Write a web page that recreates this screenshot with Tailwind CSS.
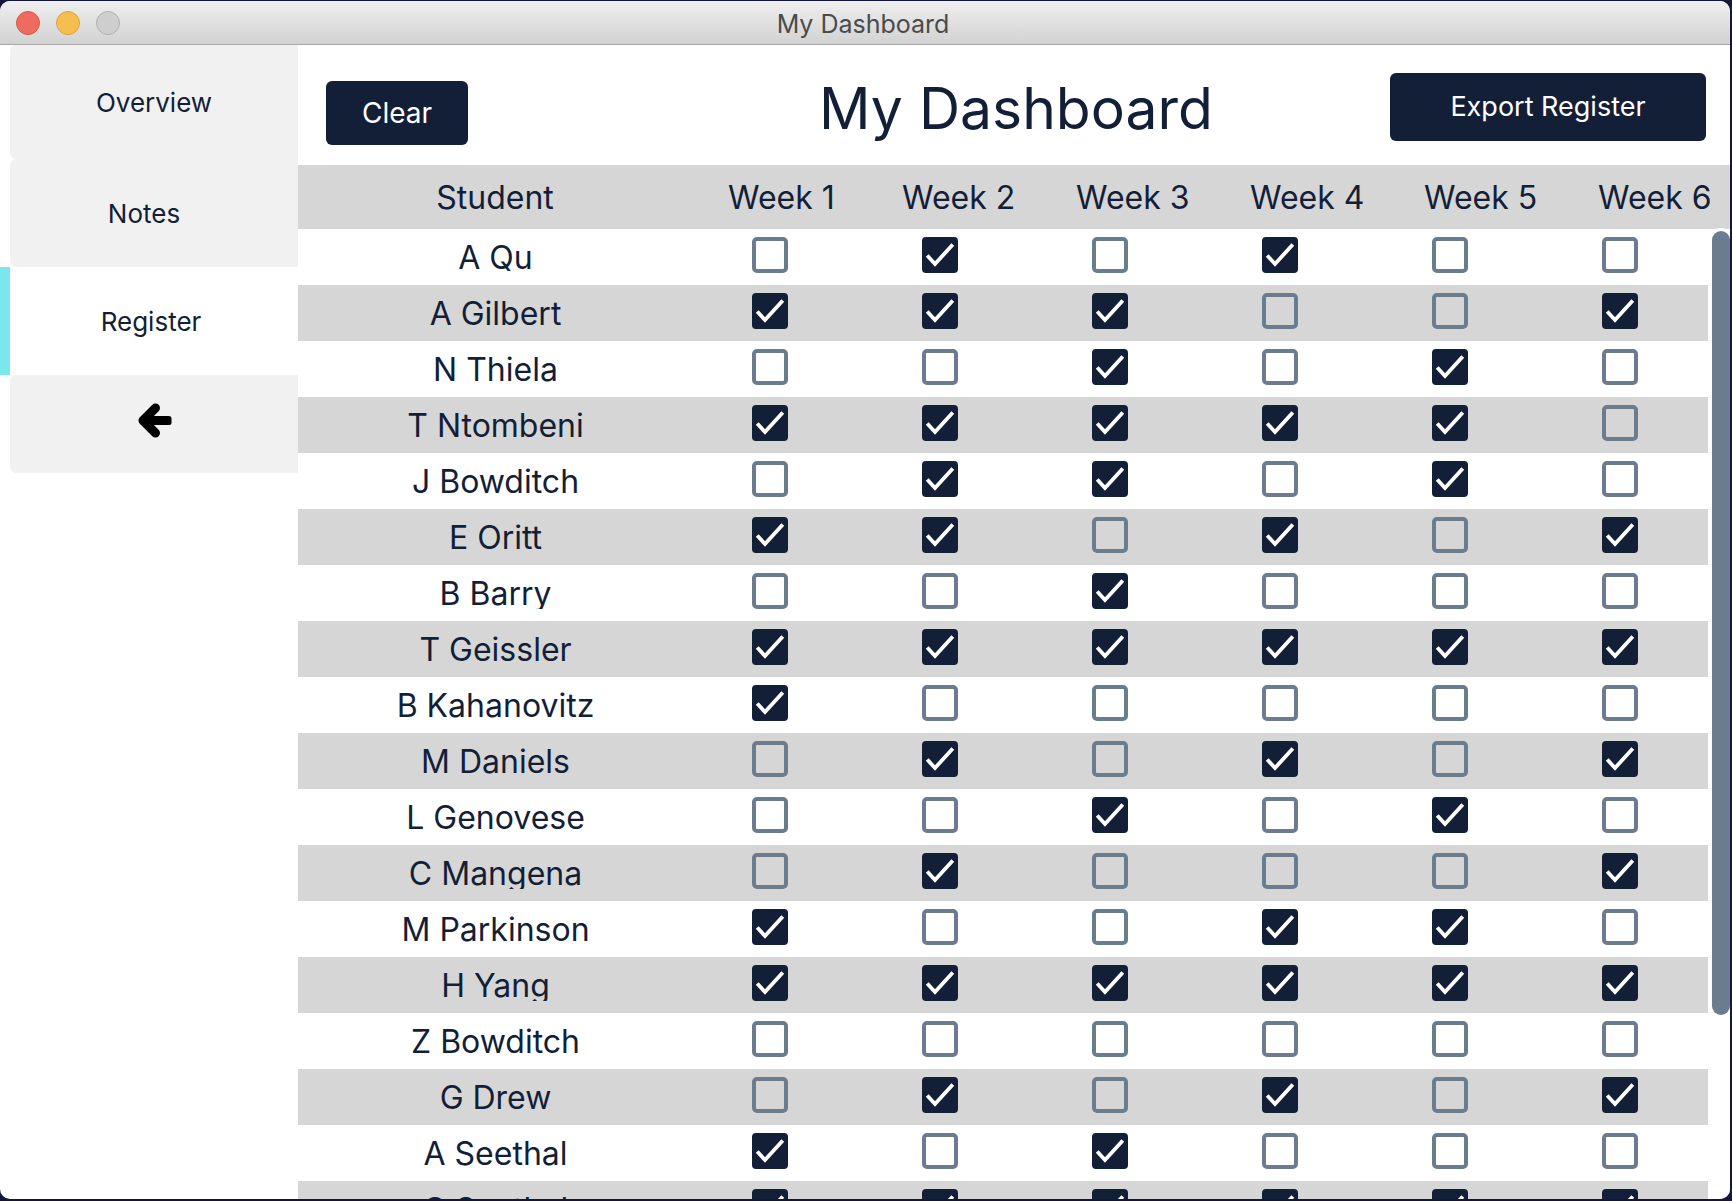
<!DOCTYPE html>
<html lang="en">
<head>
<meta charset="utf-8">
<title>My Dashboard</title>
<script src="https://cdn.jsdelivr.net/npm/@tailwindcss/browser@4"></script>
</head>
<body class="bg-[#14163a]">
<div class="flex h-screen flex-col overflow-hidden pt-px pr-0.5 pb-0.5 font-['Inter',sans-serif] text-[#131e37]">
  <div class="flex min-h-0 flex-1 flex-col overflow-hidden rounded-[10px] bg-white">
    <header class="relative flex h-11 shrink-0 items-center justify-center border-b border-[#a6a6a6] bg-linear-to-b from-[#efefef] to-[#d2d2d2]">
      <div class="absolute left-4 flex gap-4">
        <button aria-label="Close" class="size-6 rounded-full border border-[#d9564b] bg-[#ee6b60]"></button>
        <button aria-label="Minimize" class="size-6 rounded-full border border-[#dea23a] bg-[#f6be50]"></button>
        <button aria-label="Zoom" class="size-6 rounded-full border border-[#b0b0b0] bg-[#cecece]"></button>
      </div>
      <span class="pt-1 pr-1 text-[25px] text-[#4b4b4b]">My Dashboard</span>
    </header>
    <div class="flex min-h-0 flex-1">
      <nav class="flex w-[298px] shrink-0 flex-col text-[26px]">
        <a href="#overview" class="ml-2.5 flex h-[114px] items-center justify-center rounded-l-md bg-[#f1f1f1]">Overview</a>
        <a href="#notes" class="ml-2.5 flex h-[108px] items-center justify-center rounded-l-md bg-[#f1f1f1] pr-5">Notes</a>
        <a href="#register" aria-current="page" class="flex h-[108px] items-center justify-center border-l-10 border-[#7ae8ea] bg-white pr-1.5">Register</a>
        <a href="#back" aria-label="Back" class="ml-2.5 flex h-[98px] items-center justify-center rounded-l-md bg-[#f1f1f1] pb-2 pl-0.5">
          <svg class="h-[35px] w-[34px]" viewBox="0 0 34 35"><path d="M17.500 5 L5 17.500 L17.500 30" fill="none" stroke="#000" stroke-width="9" stroke-linejoin="round" stroke-linecap="round"/><rect x="6" y="13" width="27.500" height="9" rx="2.500"/></svg>
        </a>
      </nav>
      <main class="flex min-w-0 flex-1 flex-col">
        <div class="grid h-[120px] shrink-0 grid-cols-[1fr_auto_1fr] items-start pr-6 pl-7">
          <button class="mt-9 h-16 w-[142px] rounded-md bg-[#131e37] text-[28px] text-white">Clear</button>
          <h1 class="mt-7 text-[57px] leading-[72px]">My Dashboard</h1>
          <button class="mt-7 h-[68px] w-[316px] justify-self-end rounded-md bg-[#131e37] text-[27px] text-white">Export Register</button>
        </div>
        <div class="relative min-h-0 flex-1 overflow-hidden">
          <table class="block text-[32px]">
            <thead class="block">
              <tr id="weeks" class="grid h-16 grid-cols-[430px_repeat(5,174fr)_132fr] items-center bg-[#d6d6d6] pt-0.5 text-left whitespace-nowrap">
                <th scope="col" class="pr-9 text-center font-normal">Student</th>
              </tr>
            </thead>
            <tbody id="students" class="mr-[22px] block"></tbody>
          </table>
          <div class="absolute top-[63px] -right-1 bottom-0 w-[26px] rounded-t-[13px] bg-white px-1 pt-[3px]">
            <div class="h-[81%] rounded-full bg-[#6a7c8e]"></div>
          </div>
        </div>
      </main>
    </div>
  </div>
</div>
<script>
// One entry per student: name, then attendance for weeks 1 to 6.
const students = [
  ['A Qu', '010100'], ['A Gilbert', '111001'], ['N Thiela', '001010'],
  ['T Ntombeni', '111110'], ['J Bowditch', '011010'], ['E Oritt', '110101'],
  ['B Barry', '001000'], ['T Geissler', '111111'], ['B Kahanovitz', '100000'],
  ['M Daniels', '010101'], ['L Genovese', '001010'], ['C Mangena', '010001'],
  ['M Parkinson', '100110'], ['H Yang', '111111'], ['Z Bowditch', '000000'],
  ['G Drew', '010101'], ['A Seethal', '101000'], ['C Seethal', '111111'],
];
document.getElementById('weeks').insertAdjacentHTML('beforeend',
  [1, 2, 3, 4, 5, 6].map(n => `<th scope="col" class="font-normal">Week ${n}</th>`).join(''));
document.getElementById('students').innerHTML = students.map(([name, weeks]) => `
  <tr class="grid h-14 grid-cols-[387px_repeat(6,170fr)_3fr] even:bg-[#d6d6d6]">
    <th scope="row" class="h-11 overflow-hidden pt-3.5 pl-2 text-center leading-[30px] font-normal">${name}</th>
    ${[...weeks].map((v, i) => `<td class="pt-2"><label class="mx-auto grid size-9">
      <input type="checkbox" aria-label="${name}, week ${i + 1}" ${v === '1' ? 'checked' : ''} class="peer col-start-1 row-start-1 size-9 appearance-none rounded-[5px] border-4 border-[#6a7c8e] checked:rounded-sm checked:border-[#131e37] checked:bg-[#131e37]">
      <svg class="pointer-events-none col-start-1 row-start-1 hidden size-9 peer-checked:block" viewBox="0 0 36 36" fill="none" stroke="#fff" stroke-width="3.800"><path d="M5.200 18.500 L13 27 L30.800 7.500"/></svg>
    </label></td>`).join('')}
  </tr>`).join('');
</script>
</body>
</html>
